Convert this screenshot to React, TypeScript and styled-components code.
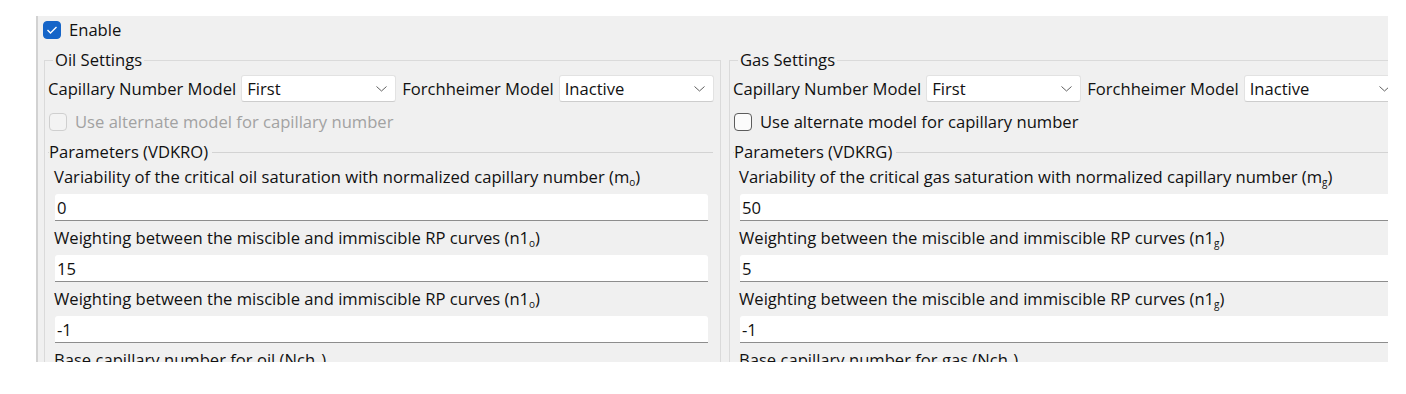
import React from "react";
import styled, { createGlobalStyle } from "styled-components";

const Global = createGlobalStyle`
  html, body { margin: 0; padding: 0; background: #ffffff; }
  body { font-family: "Open Sans", "Noto Sans", sans-serif; }
`;

const Page = styled.div`
  width: 1406px;
  height: 394px;
  box-sizing: border-box;
  padding: 16px 0 0 36px;
`;

const Panel = styled.div`
  width: 1352px;
  height: 346px;
  box-sizing: border-box;
  background: #f0f0f0;
  border-left: 2px solid #d2d2d2;
  overflow: hidden;
  padding: 5px 0 0 5px;
  font-family: "Open Sans", "Noto Sans", sans-serif;
  font-size: 16.6px;
  color: #111111;
`;

const CheckRow = styled.label<{ $disabled?: boolean }>`
  display: flex;
  align-items: center;
  gap: 8px;
  height: 18px;
  line-height: 20px;
  white-space: nowrap;
  color: ${(p) => (p.$disabled ? "#a2a2a2" : "#111111")};
`;

const Box = styled.span<{ $checked?: boolean; $disabled?: boolean }>`
  width: 18px;
  height: 18px;
  box-sizing: border-box;
  border-radius: 4px;
  flex-shrink: 0;
  display: flex;
  align-items: center;
  justify-content: center;
  background: ${(p) => (p.$checked ? "#1565c8" : p.$disabled ? "#f3f3f3" : "#fbfbfb")};
  border: 1px solid
    ${(p) => (p.$checked ? "#1565c8" : p.$disabled ? "#cfcfcf" : "#5c5c5c")};
`;

const Columns = styled.div`
  display: flex;
  gap: 8px;
  margin: 11px 0 0 1px;
`;

const Group = styled.fieldset`
  width: 677px;
  flex-shrink: 0;
  box-sizing: border-box;
  margin: 0;
  min-width: 0;
  padding: 5px 3px 40px 3px;
  border: 1px solid #dadada;
`;

const GroupTitle = styled.legend`
  margin-left: 5px;
  padding: 0 2px;
  line-height: 20px;
  font-size: 16.6px;
`;

const ComboRow = styled.div`
  display: flex;
  align-items: center;
  height: 27px;
  white-space: nowrap;
`;

const FieldLabel = styled.span`
  line-height: 20px;
`;

const Combo = styled.div<{ $last?: boolean }>`
  width: 155px;
  height: 27px;
  box-sizing: border-box;
  flex-shrink: 0;
  margin: 0 ${(p) => (p.$last ? 0 : 6)}px 0 5px;
  background: #ffffff;
  border: 1px solid #e2e2e2;
  border-bottom-color: #cdcdcd;
  border-radius: 3px;
  display: flex;
  align-items: center;
  justify-content: space-between;
  padding: 0 8px 0 5px;
  line-height: 20px;
`;

const Spacer = styled.div`
  height: 11px;
`;

const Params = styled.fieldset`
  margin: 11px 4px 0 0;
  min-width: 0;
  padding: 5px 0 0 6px;
  border: none;
  border-top: 1px solid #d3d3d3;
`;

const ParamsTitle = styled.legend`
  margin-left: -5px;
  padding: 0 4px 0 0;
  line-height: 20px;
  font-size: 16.6px;
`;

const ParamLabel = styled.div`
  line-height: 20px;
  white-space: nowrap;
`;

const Sub = styled.sub`
  font-size: 10px;
  vertical-align: -3px;
  line-height: 0;
`;

const Input = styled.input`
  display: block;
  width: 653px;
  height: 27px;
  box-sizing: border-box;
  margin: 7px 0 7px 1px;
  padding: 0 3px 0 2px;
  border: none;
  border-bottom: 1px solid #8d8d8d;
  border-radius: 3px 3px 0 0;
  background: #ffffff;
  font-family: "Open Sans", "Noto Sans", sans-serif;
  font-size: 16.6px;
  color: #111111;
  outline: none;
`;

const Chevron = () => (
  <svg width="11" height="6" viewBox="0 0 11 6" aria-hidden="true">
    <polyline points="0.5,0.5 5.5,5 10.5,0.5" fill="none" stroke="#5f5f5f" strokeWidth="1" />
  </svg>
);

const Check = () => (
  <svg width="12" height="10" viewBox="0 0 12 10" aria-hidden="true">
    <polyline points="1.5,5 4.5,8 10.5,2" fill="none" stroke="#ffffff" strokeWidth="1.4" />
  </svg>
);

type Param = { text: string; sub?: string; value: string };

type Side = {
  title: string;
  disabled: boolean;
  params: string;
  items: Param[];
};

const sides: Side[] = [
  {
    title: "Oil Settings",
    disabled: true,
    params: "Parameters (VDKRO)",
    items: [
      { text: "Variability of the critical oil saturation with normalized capillary number (m", sub: "o", value: "0" },
      { text: "Weighting between the miscible and immiscible RP curves (n1", sub: "o", value: "15" },
      { text: "Weighting between the miscible and immiscible RP curves (n1", sub: "o", value: "-1" },
      { text: "Base capillary number for oil (Nch", sub: "o", value: "" },
    ],
  },
  {
    title: "Gas Settings",
    disabled: false,
    params: "Parameters (VDKRG)",
    items: [
      { text: "Variability of the critical gas saturation with normalized capillary number (m", sub: "g", value: "50" },
      { text: "Weighting between the miscible and immiscible RP curves (n1", sub: "g", value: "5" },
      { text: "Weighting between the miscible and immiscible RP curves (n1", sub: "g", value: "-1" },
      { text: "Base capillary number for gas (Nch", sub: "g", value: "" },
    ],
  },
];

export default function App() {
  return (
    <Page>
      <Global />
      <Panel>
        <CheckRow>
          <Box $checked>
            <Check />
          </Box>
          Enable
        </CheckRow>
        <Columns>
          {sides.map((s) => (
            <Group key={s.title}>
              <GroupTitle>{s.title}</GroupTitle>
              <ComboRow>
                <FieldLabel>Capillary Number Model</FieldLabel>
                <Combo>
                  First
                  <Chevron />
                </Combo>
                <FieldLabel>Forchheimer Model</FieldLabel>
                <Combo $last>
                  Inactive
                  <Chevron />
                </Combo>
              </ComboRow>
              <Spacer />
              <CheckRow $disabled={s.disabled} style={{ marginLeft: 1 }}>
                <Box $disabled={s.disabled} />
                Use alternate model for capillary number
              </CheckRow>
              <Params>
                <ParamsTitle>{s.params}</ParamsTitle>
                {s.items.map((it, i) => (
                  <React.Fragment key={i}>
                    <ParamLabel>
                      {it.text}
                      <Sub>{it.sub}</Sub>)
                    </ParamLabel>
                    {i < 3 && <Input readOnly value={it.value} />}
                  </React.Fragment>
                ))}
              </Params>
            </Group>
          ))}
        </Columns>
      </Panel>
    </Page>
  );
}
